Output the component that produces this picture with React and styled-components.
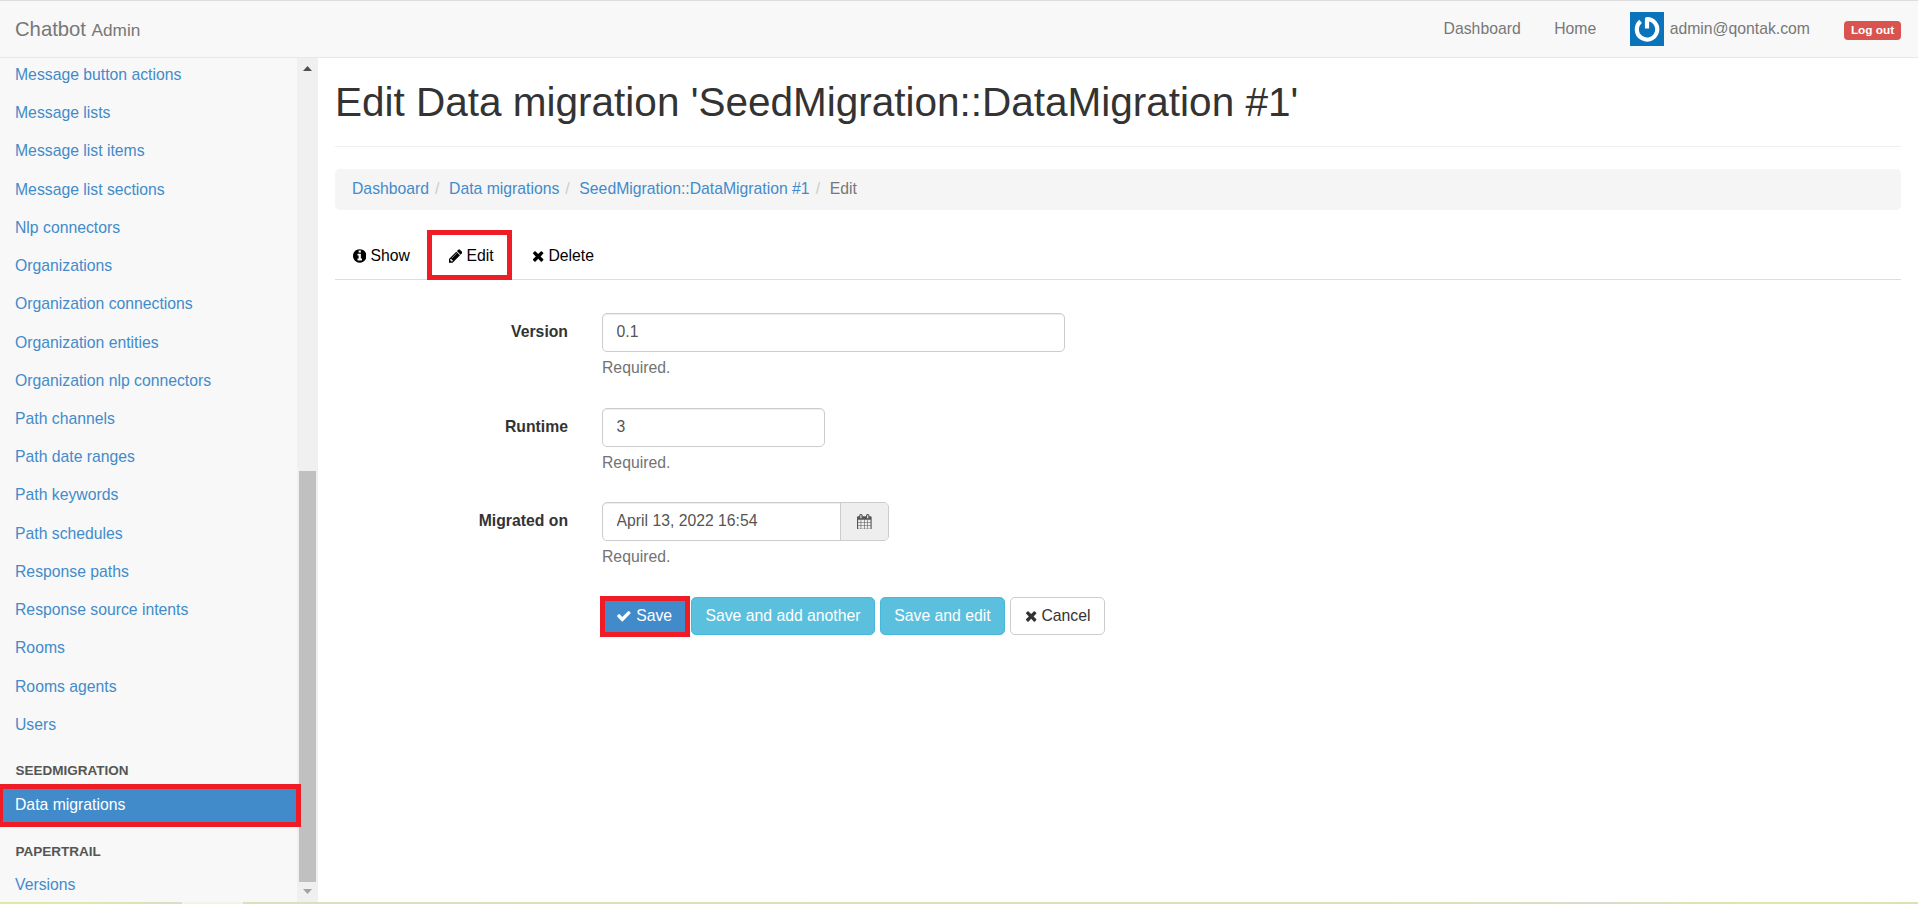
import React from 'react';
import styled, { createGlobalStyle } from 'styled-components';

const Global = createGlobalStyle`
  * { box-sizing: border-box; }
  html, body { margin: 0; height: 100%; overflow: hidden; }
  body {
    font-family: "Liberation Sans", Arial, sans-serif;
    font-size: 15.75px;
    line-height: 24px;
    color: #333;
    background: #fff;
  }
  a { text-decoration: none; color: #428bca; }
`;

const Page = styled.div`
  height: 904px;
  display: flex;
  flex-direction: column;
  overflow: hidden;
`;

const Navbar = styled.header`
  flex: none;
  height: 58px;
  display: flex;
  align-items: center;
  justify-content: space-between;
  padding: 0 17px 0 15px;
  background: #f8f8f8;
  border-top: 1px solid #ddd;
  border-bottom: 1px solid #e7e7e7;
  color: #777;
`;

const Brand = styled.div`
  font-size: 20.25px;
  small { font-size: 17.2px; }
`;

const NavLinks = styled.nav`
  display: flex;
  align-items: center;
  height: 100%;
  a { color: #777; }
`;

const NavLink = styled.a`
  margin-right: 33.5px;
  white-space: nowrap;
`;

const UserLink = styled(NavLink)`
  display: flex;
  align-items: center;
  gap: 6px;
  margin-right: 34px;
`;

const Avatar = styled.svg`
  width: 34px;
  height: 34px;
`;

const LogoutBadge = styled.span`
  width: 57px;
  height: 19px;
  margin-top: 3px;
  border-radius: 4px;
  background: #d9534f;
  color: #fff;
  font-size: 11.81px;
  font-weight: bold;
  line-height: 18px;
  text-align: center;
  white-space: nowrap;
`;

const Body = styled.div`
  flex: 1;
  min-height: 0;
  display: flex;
`;

const Sidebar = styled.aside`
  width: 297px;
  background: #f8f8f8;
  flex: none;
`;

const SideLink = styled.a`
  display: flex;
  align-items: center;
  height: 38.24px;
  padding-left: 15px;
  padding-bottom: 4.5px;
`;

const SideHeading = styled.div`
  height: ${(p) => p.$height}px;
  padding: ${(p) => p.$top}px 0 0 15.5px;
  color: #555;
  font-size: 13.5px;
  font-weight: bold;
  line-height: 20px;
  text-transform: uppercase;
`;

const ActiveSideLink = styled.a`
  position: relative;
  z-index: 1;
  display: flex;
  align-items: center;
  width: 301px;
  height: 43px;
  padding: 0 0 0 12px;
  border: 5px solid #ee1c25;
  border-left-width: 3px;
  background: #428bca;
  color: #fff;
`;

const Scrollbar = styled.div`
  flex: none;
  width: 21px;
  display: flex;
  flex-direction: column;
  align-items: center;
  background: #f0f0f0;
`;

const ScrollArrow = styled.svg`
  flex: none;
  width: 9px;
  height: 5px;
  margin: ${(p) => p.$margin};
`;

const Thumb = styled.div`
  width: 17px;
  height: 411px;
  margin-top: 400px;
  background: #c0c0c0;
`;

const Content = styled.main`
  flex: 1;
  min-width: 0;
  padding: 0 17px;
`;

const Title = styled.h1`
  margin: 0;
  height: 89px;
  padding-top: 21px;
  border-bottom: 1px solid #eee;
  font-size: 40.5px;
  font-weight: normal;
  line-height: 47px;
`;

const Breadcrumb = styled.div`
  display: flex;
  height: 41px;
  margin-top: 22px;
  padding: 8px 17px;
  border-radius: 5px;
  background: #f5f5f5;
  color: #777;
`;

const Separator = styled.span`
  width: 20px;
  padding-left: 6px;
  color: #ccc;
`;

const Tabs = styled.nav`
  display: flex;
  height: 70px;
  padding-top: 20px;
  border-bottom: 1px solid #ddd;
`;

const Tab = styled.a`
  display: flex;
  align-items: center;
  height: 50px;
  width: ${(p) => p.$width}px;
  padding: 1px 0 0 ${(p) => p.$pad}px;
  gap: 4.5px;
  color: #000;
`;

const MarkedTab = styled(Tab)`
  border: 5px solid #ee1c25;
`;

const Form = styled.form`
  padding-top: 33px;
`;

const Field = styled.div`
  display: flex;
  height: 94.5px;
`;

const Label = styled.label`
  width: 233px;
  margin-right: 34px;
  padding-top: 7px;
  font-weight: bold;
  text-align: right;
`;

const InputGroup = styled.div`
  display: flex;
  width: ${(p) => p.$width}px;
  height: 39px;
  border: 1px solid #ccc;
  border-radius: 5px;
  box-shadow: inset 0 1px 1px rgba(0, 0, 0, 0.075);
  overflow: hidden;
`;

const Input = styled.input`
  flex: 1;
  min-width: 0;
  padding: 0 13.5px 1px;
  border: 0;
  background: transparent;
  color: #555;
  font: inherit;
  outline: 0;
`;

const Addon = styled.span`
  width: 48px;
  display: flex;
  align-items: center;
  justify-content: center;
  border-left: 1px solid #ccc;
  background: #eee;
  color: #555;
`;

const Help = styled.div`
  padding-top: 4px;
  color: #737373;
`;

const Actions = styled.div`
  display: flex;
  align-items: flex-start;
  gap: 5px;
  margin-top: -0.5px;
  padding-left: 265px;
`;

const tones = {
  info: 'background: #5bc0de; border: 1px solid #46b8da; color: #fff;',
  plain: 'background: #fff; border: 1px solid #ccc; color: #333;',
};

const Button = styled.button`
  display: flex;
  align-items: center;
  justify-content: center;
  gap: 4.5px;
  width: ${(p) => p.$width}px;
  height: 38px;
  margin-top: 1px;
  padding: 0 0 1px;
  border-radius: 5px;
  font: inherit;
  white-space: nowrap;
  ${(p) => tones[p.$tone]}
`;

const SaveButton = styled(Button)`
  height: 41px;
  margin: 0 -4px 0 0;
  padding-right: 2px;
  border: 5px solid #ee1c25;
  border-radius: 0;
  background: #428bca;
  color: #fff;
`;

const Taskbar = styled.footer`
  flex: none;
  height: 2px;
  background: linear-gradient(
    90deg,
    #e2e8a5 0, #e2e8a8 80px, #d9dec6 182px,
    #f2f3e8 182px, #f2f3e8 243px,
    #dbe0bd 243px, #dbe1b8 1440px, #d8dcc8 1600px, #e1e7a6 1770px, #dbe1b5 1918px
  );
`;

const Glyph = styled.svg`
  flex: none;
  height: 15.75px;
  fill: currentColor;
`;

const glyphs = {
  info: ['128 0 1536 1792', 13.5, 'M1152 1376v-160q0-14-9-23t-23-9h-96v-512q0-14-9-23t-23-9h-320q-14 0-23 9t-9 23v160q0 14 9 23t23 9h96v320h-96q-14 0-23 9t-9 23v160q0 14 9 23t23 9h448q14 0 23-9t9-23zm-128-896v-160q0-14-9-23t-23-9h-192q-14 0-23 9t-9 23v160q0 14 9 23t23 9h192q14 0 23-9t9-23zm640 416q0 209-103 385.5t-279.5 279.5-385.5 103-385.5-103-279.5-279.5-103-385.5 103-385.5 279.5-279.5 385.5-103 385.5 103 279.5 279.5 103 385.5z'],
  pencil: ['128 0 1536 1792', 13.5, 'M491 1536l91-91-235-235-91 91v107h128v128h107zm523-928q0-22-22-22-10 0-17 7l-542 542q-7 7-7 17 0 22 22 22 10 0 17-7l542-542q7-7 7-17zm-54-192l416 416-832 832h-416v-416zm683 96q0 53-37 90l-166 166-416-416 166-165q36-38 90-38 53 0 91 38l235 234q37 39 37 91z'],
  times: ['192 0 1408 1792', 12.38, 'M1490 1322q0 40-28 68l-136 136q-28 28-68 28t-68-28l-294-294-294 294q-28 28-68 28t-68-28l-136-136q-28-28-28-68t28-68l294-294-294-294q-28-28-28-68t28-68l136-136q28-28 68-28t68 28l294 294 294-294q28-28 68-28t68 28l136 136q28 28 28 68t-28 68l-294 294 294 294q28 28 28 68z'],
  check: ['0 0 1792 1792', 15.75, 'M1671 566q0 40-28 68l-724 724-136 136q-28 28-68 28t-68-28l-136-136-362-362q-28-28-28-68t28-68l136-136q28-28 68-28t68 28l294 295 656-657q28-28 68-28t68 28l136 136q28 28 28 68z'],
  calendar: ['64 0 1664 1792', 14.63, 'M192 1664h288v-288h-288v288zm352 0h320v-288h-320v288zm-352-352h288v-320h-288v320zm352 0h320v-320h-320v320zm-352-384h288v-288h-288v288zm736 736h320v-288h-320v288zm-384-736h320v-288h-320v288zm768 736h288v-288h-288v288zm-384-352h320v-320h-320v320zm-352-864v-288q0-13-9.5-22.5t-22.5-9.5h-64q-13 0-22.5 9.5t-9.5 22.5v288q0 13 9.5 22.5t22.5 9.5h64q13 0 22.5-9.5t9.5-22.5zm736 864h288v-320h-288v320zm-384-384h320v-288h-320v288zm384 0h288v-288h-288v288zm32-480v-288q0-13-9.5-22.5t-22.5-9.5h-64q-13 0-22.5 9.5t-9.5 22.5v288q0 13 9.5 22.5t22.5 9.5h64q13 0 22.5-9.5t9.5-22.5zm384-64v1280q0 52-38 90t-90 38h-1408q-52 0-90-38t-38-90v-1280q0-52 38-90t90-38h128v-96q0-66 47-113t113-47h64q66 0 113 47t47 113v96h384v-96q0-66 47-113t113-47h64q66 0 113 47t47 113v96h128q52 0 90 38t38 90z'],
};

function Icon({ name }) {
  const [viewBox, width, d] = glyphs[name];
  return <Glyph viewBox={viewBox} width={width} aria-hidden="true"><path d={d} /></Glyph>;
}

const links = [
  'Message button actions', 'Message lists', 'Message list items', 'Message list sections',
  'Nlp connectors', 'Organizations', 'Organization connections', 'Organization entities',
  'Organization nlp connectors', 'Path channels', 'Path date ranges', 'Path keywords',
  'Path schedules', 'Response paths', 'Response source intents', 'Rooms', 'Rooms agents', 'Users',
];

const fields = [
  { label: 'Version', value: '0.1', width: 463 },
  { label: 'Runtime', value: '3', width: 223 },
  { label: 'Migrated on', value: 'April 13, 2022 16:54', width: 287, calendar: true },
];

export default function App() {
  return (
    <Page>
      <Global />
      <Navbar>
        <Brand>Chatbot <small>Admin</small></Brand>
        <NavLinks>
          <NavLink>Dashboard</NavLink>
          <NavLink>Home</NavLink>
          <UserLink>
            <Avatar viewBox="0 0 34 34">
              <rect width="34" height="34" fill="#0a73b9" />
              <path d="M10.6 9.4A10.2 10.2 0 1 0 17 7.1V16.5" fill="none" stroke="#fff" strokeWidth="4.2" strokeLinejoin="round" />
            </Avatar>
            <span>admin@qontak.com</span>
          </UserLink>
          <LogoutBadge>Log out</LogoutBadge>
        </NavLinks>
      </Navbar>
      <Body>
        <Sidebar>
          {links.map((t) => <SideLink key={t}>{t}</SideLink>)}
          <SideHeading $height={37.7} $top={15.2}>SeedMigration</SideHeading>
          <ActiveSideLink>Data migrations</ActiveSideLink>
          <SideHeading $height={40.75} $top={15}>PaperTrail</SideHeading>
          <SideLink>Versions</SideLink>
        </Sidebar>
        <Scrollbar>
          <ScrollArrow $margin="8px 0 0" viewBox="0 0 9 5"><path d="M0 5L4.5 0L9 5Z" fill="#505050" /></ScrollArrow>
          <Thumb />
          <ScrollArrow $margin="auto 0 8px" viewBox="0 0 9 5"><path d="M0 0L4.5 5L9 0Z" fill="#a3a3a3" /></ScrollArrow>
        </Scrollbar>
        <Content>
          <Title>Edit Data migration 'SeedMigration::DataMigration #1'</Title>
          <Breadcrumb>
            <a>Dashboard</a><Separator>/</Separator>
            <a>Data migrations</a><Separator>/</Separator>
            <a>SeedMigration::DataMigration #1</a><Separator>/</Separator>
            <span>Edit</span>
          </Breadcrumb>
          <Tabs>
            <Tab $width={92} $pad={17.5}><Icon name="info" />Show</Tab>
            <MarkedTab $width={85} $pad={16.5}><Icon name="pencil" />Edit</MarkedTab>
            <Tab $width={100} $pad={19.5}><Icon name="times" />Delete</Tab>
          </Tabs>
          <Form>
            {fields.map((f) => (
              <Field key={f.label}>
                <Label>{f.label}</Label>
                <div>
                  <InputGroup $width={f.width}>
                    <Input defaultValue={f.value} />
                    {f.calendar && <Addon><Icon name="calendar" /></Addon>}
                  </InputGroup>
                  <Help>Required.</Help>
                </div>
              </Field>
            ))}
            <Actions>
              <SaveButton type="button" $width={90}><Icon name="check" />Save</SaveButton>
              <Button type="button" $tone="info" $width={184}>Save and add another</Button>
              <Button type="button" $tone="info" $width={125}>Save and edit</Button>
              <Button type="button" $tone="plain" $width={95}><Icon name="times" />Cancel</Button>
            </Actions>
          </Form>
        </Content>
      </Body>
      <Taskbar />
    </Page>
  );
}
